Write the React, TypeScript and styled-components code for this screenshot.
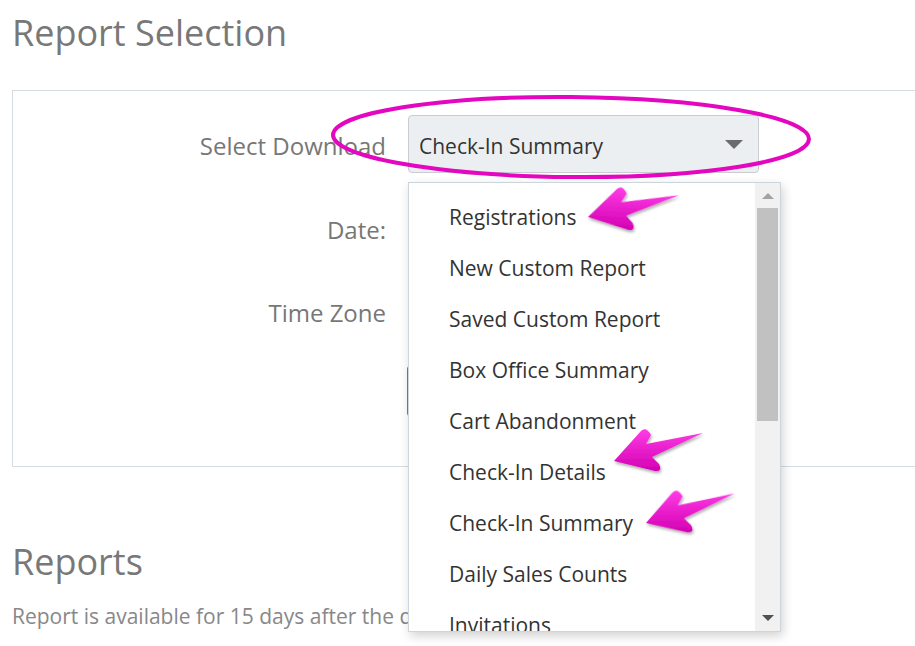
import React from "react";
import styled, { createGlobalStyle } from "styled-components";

const GlobalStyle = createGlobalStyle`
  html, body {
    margin: 0;
    padding: 0;
    background: #fff;
    overflow: hidden;
  }
  body {
    font-family: "Open Sans", "Noto Sans", sans-serif;
  }
`;

const Page = styled.div`
  position: relative;
  width: 915px;
  height: 646px;
  padding: 0 0 0 12px;
  box-sizing: border-box;
  overflow: hidden;
`;

const PageTitle = styled.h1<{ top: number }>`
  margin: ${(p) => p.top}px 0 0;
  font-size: 36px;
  line-height: 1.2;
  font-weight: 400;
  color: #787878;
`;

const Panel = styled.section`
  margin: 36px -40px 0 0;
  border: 1px solid #d5dde3;
  padding: 24px 0 49px;
  display: flex;
  flex-direction: column;
  gap: 26px;
`;

const FormRow = styled.div`
  display: grid;
  grid-template-columns: 373px 351px;
  column-gap: 22px;
  align-items: center;
`;

const Label = styled.label`
  text-align: right;
  padding-top: 5px;
  font-size: 24px;
  line-height: 1.2;
  color: #777;
`;

const Control = styled.div`
  position: relative;
`;

const SelectBox = styled.div`
  height: 58px;
  box-sizing: border-box;
  padding: 4px 15px 0 10px;
  display: flex;
  align-items: center;
  justify-content: space-between;
  background: #eceff2;
  border: 1px solid #c9ccd0;
  border-radius: 4px;
  font-size: 21px;
  line-height: 1.2;
  color: #333;
`;

const Caret = styled.span`
  width: 0;
  height: 0;
  margin-top: -3px;
  border-left: 9px solid transparent;
  border-right: 9px solid transparent;
  border-top: 9px solid #6b6b6b;
`;

const Input = styled.div<{ h: number }>`
  height: ${(p) => p.h}px;
  box-sizing: border-box;
  border: 1px solid #ccd3d9;
  border-radius: 4px;
  background: #fff;
`;

const SubmitButton = styled.div`
  margin-left: -1px;
  width: 160px;
  height: 50px;
  border-radius: 4px;
  background: #f26a3d;
  border: 1px solid #e2572a;
`;

const Dropdown = styled.div`
  position: absolute;
  top: 67px;
  left: 0;
  width: 373px;
  height: 450px;
  box-sizing: border-box;
  border: 1px solid #cdd5dc;
  background: #fff;
  box-shadow: 2px 4px 10px rgba(0, 0, 0, 0.18);
  display: flex;
  z-index: 5;
`;

const OptionList = styled.ul`
  flex: 1;
  margin: 0;
  padding: 9px 0 0;
  list-style: none;
  overflow: hidden;
`;

const OptionItem = styled.li`
  height: 51px;
  display: flex;
  align-items: center;
  padding-left: 40px;
  font-size: 21px;
  line-height: 1.2;
  color: #333;
  white-space: nowrap;
`;

const ScrollTrack = styled.div`
  width: 25px;
  background: #f1f1f1;
  display: flex;
  flex-direction: column;
  align-items: center;
`;

const ScrollArrow = styled.span<{ dir: "up" | "down" }>`
  margin: ${(p) => (p.dir === "up" ? "10px 0 9px" : "auto 0 10px")};
  width: 0;
  height: 0;
  border-left: 6px solid transparent;
  border-right: 6px solid transparent;
  ${(p) =>
    p.dir === "up"
      ? "border-bottom: 6px solid #a3a3a3;"
      : "border-top: 6px solid #505050;"}
`;

const ScrollThumb = styled.div`
  width: 21px;
  height: 213px;
  background: #c1c1c1;
`;

const SectionTitle = styled(PageTitle)``;

const Note = styled.p`
  margin: 21px 0 0;
  font-size: 21px;
  line-height: 1.2;
  color: #888;
  white-space: nowrap;
`;

const Annotations = styled.svg`
  position: absolute;
  top: 0;
  left: 0;
  pointer-events: none;
  z-index: 10;
`;

const options = [
  "Registrations",
  "New Custom Report",
  "Saved Custom Report",
  "Box Office Summary",
  "Cart Abandonment",
  "Check-In Details",
  "Check-In Summary",
  "Daily Sales Counts",
  "Invitations",
];

const arrowPath =
  "M0,0 L27,-30 Q32,-35 37,-26 L32,-17 L89,-28 L38,-4 L45,3 Q49,11 41,10 Z";

const arrows = [
  { x: 588, y: 217, rot: 4 },
  { x: 614, y: 461, rot: 0 },
  { x: 646, y: 523, rot: -1 },
];

const App = () => {
  return (
    <>
      <GlobalStyle />
      <Page>
        <PageTitle top={11}>Report Selection</PageTitle>
        <Panel>
          <FormRow>
            <Label>Select Download</Label>
            <Control>
              <SelectBox>
                <span>Check-In Summary</span>
                <Caret />
              </SelectBox>
              <Dropdown>
                <OptionList>
                  {options.map((o) => (
                    <OptionItem key={o}>{o}</OptionItem>
                  ))}
                </OptionList>
                <ScrollTrack>
                  <ScrollArrow dir="up" />
                  <ScrollThumb />
                  <ScrollArrow dir="down" />
                </ScrollTrack>
              </Dropdown>
            </Control>
          </FormRow>
          <FormRow>
            <Label>Date:</Label>
            <Input h={57} />
          </FormRow>
          <FormRow>
            <Label>Time Zone</Label>
            <Input h={57} />
          </FormRow>
          <FormRow>
            <span />
            <SubmitButton />
          </FormRow>
        </Panel>
        <SectionTitle top={73}>Reports</SectionTitle>
        <Note>Report is available for 15 days after the date it was requested.</Note>

        <Annotations width={915} height={646} viewBox="0 0 915 646">
          <defs>
            <linearGradient id="arrowFill" x1="0" y1="0" x2="0" y2="1">
              <stop offset="0" stopColor="#ff3ce6" />
              <stop offset="1" stopColor="#d200b2" />
            </linearGradient>
            <filter id="arrowShadow" x="-20%" y="-20%" width="140%" height="160%">
              <feDropShadow dx="1" dy="2" stdDeviation="1.4" floodColor="#000" floodOpacity="0.35" />
            </filter>
          </defs>
          <ellipse
            cx={571}
            cy={137}
            rx={238}
            ry={40}
            transform="rotate(0.5 571 137)"
            fill="none"
            stroke="#e308bf"
            strokeWidth={4}
          />
          {arrows.map((a) => (
            <path
              key={a.y}
              d={arrowPath}
              fill="url(#arrowFill)"
              filter="url(#arrowShadow)"
              transform={`translate(${a.x} ${a.y}) rotate(${a.rot})`}
            />
          ))}
        </Annotations>
      </Page>
    </>
  );
};

export default App;
